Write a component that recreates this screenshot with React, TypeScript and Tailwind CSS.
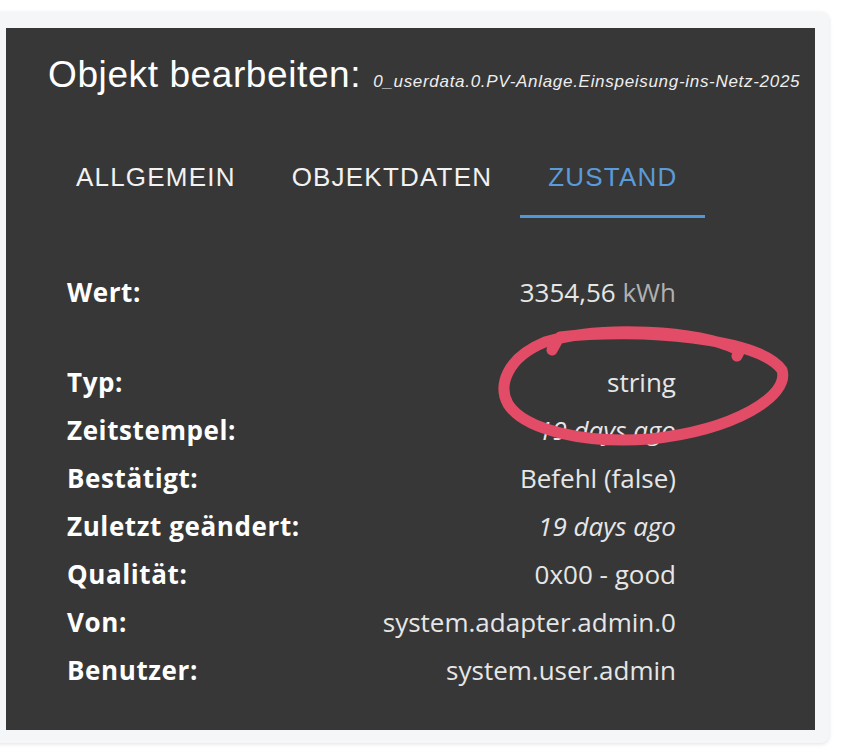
import React from 'react'

const rows: { label: string; value: React.ReactNode }[] = [
  { label: 'Typ:', value: 'string' },
  { label: 'Zeitstempel:', value: <i>19 days ago</i> },
  { label: 'Bestätigt:', value: 'Befehl (false)' },
  { label: 'Zuletzt geändert:', value: <i>19 days ago</i> },
  { label: 'Qualität:', value: '0x00 - good' },
  { label: 'Von:', value: 'system.adapter.admin.0' },
  { label: 'Benutzer:', value: 'system.user.admin' },
]

const tabs = ['ALLGEMEIN', 'OBJEKTDATEN', 'ZUSTAND']

function Row({ label, value }: { label: string; value: React.ReactNode }) {
  return (
    <div className="flex justify-between leading-[48px]">
      <span className="font-bold text-white tracking-[0.6px]">{label}</span>
      <span className="text-[#e6e6e6]">{value}</span>
    </div>
  )
}

export default function App() {
  return (
    <div className="relative w-[849px] h-[753px] bg-white overflow-hidden pt-[12px]">
      <div className="-ml-[10px] w-[839px] h-[731px] bg-[#f5f6f8] rounded-lg shadow-[0_1px_4px_rgba(0,0,0,0.12)] pt-[16px] pl-[16px]">
        <div className="w-[809px] h-[702px] bg-[#373737] pt-[28px] pl-[42px]">
          <div className="flex items-baseline gap-[12px] text-white font-['Liberation_Sans',Arial,sans-serif]">
            <span className="text-[37px] leading-[37px] tracking-[0.6px]">Objekt bearbeiten:</span>
            <span className="text-[17px] italic tracking-[0.7px] text-[#eeeeee]">
              0_userdata.0.PV-Anlage.Einspeisung-ins-Netz-2025
            </span>
          </div>

          <div className="flex mt-[67px] font-['Liberation_Sans',Arial,sans-serif]">
            {tabs.map((t) => {
              const active = t === 'ZUSTAND'
              return (
                <div key={t} className="flex flex-col">
                  <span
                    className={`px-[28px] text-[26px] leading-[30px] tracking-[1.2px] ${
                      active ? 'text-[#5b9bd9]' : 'text-[#f2f2f2]'
                    }`}
                  >
                    {t}
                  </span>
                  <div className={`mt-[23px] h-[3px] ${active ? 'bg-[#4d97da]' : ''}`} />
                </div>
              )
            })}
          </div>

          <div className="mt-[50px] ml-[19px] w-[609px] text-[26px] font-['Open_Sans','Noto_Sans',sans-serif]">
            <div className="flex justify-between leading-[48px] mb-[42px]">
              <span className="font-bold text-white tracking-[0.6px]">Wert:</span>
              <span className="text-[#e6e6e6]">
                3354,56 <span className="text-[#b0b0b0]">kWh</span>
              </span>
            </div>
            {rows.map((r) => (
              <Row key={r.label} label={r.label} value={r.value} />
            ))}
          </div>
        </div>
      </div>

      {/* hand-drawn annotation around the type */}
      <svg className="absolute left-0 top-0 pointer-events-none" width="849" height="753" viewBox="0 0 849 753">
        <path
          d="M 560 337 C 640 328, 760 338, 782 370 C 790 396, 735 430, 650 439 C 585 444, 524 430, 508 404 C 498 386, 506 358, 545 342 C 600 325, 700 330, 738 350 M 552 350 L 557 341 M 737 356 L 741 348"
          fill="none"
          stroke="#e24c67"
          strokeWidth="11"
          strokeLinecap="round"
          strokeLinejoin="round"
        />
      </svg>
    </div>
  )
}
